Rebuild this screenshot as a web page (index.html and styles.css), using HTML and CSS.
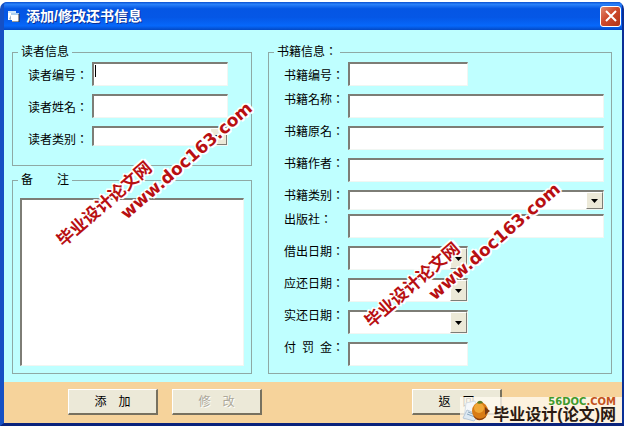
FILE: index.html
```html
<!DOCTYPE html>
<html lang="zh">
  <head>
    <meta charset="UTF-8" />
    <title>添加/修改还书信息</title>
    <link rel="stylesheet" href="styles.css">
  </head>
  <body>
    <div class="window">
      <header class="titlebar">
        <svg class="app-icon" width="12" height="12" viewBox="0 0 12 12">
          <path d="M0 1h8v2h3v9H4v-2H0z" fill="#fff" />
          <path d="M0 1h8v2H0z" fill="#cfe6fa" />
          <path d="M3 4h8" stroke="#5aa0e0" />
          <path d="M1 9l2-4v5z" fill="#9fb4c8" />
          <path d="M11 4v8H4" fill="none" stroke="#333" />
        </svg>
        <h1>添加/修改还书信息</h1>
        <button class="close" type="button" aria-label="关闭">
          <svg width="12" height="12" viewBox="0 0 12 12">
            <path d="M1 1l10 10M11 1L1 11" stroke="#fff" stroke-width="2" />
          </svg>
        </button>
      </header>

      <form>
        <main class="panels">
          <div class="column">
            <fieldset class="group reader">
              <legend>读者信息</legend>
              <div class="row middle">
                <label for="readerId">读者编号：</label>
                <input id="readerId" class="field current" type="text" />
              </div>
              <div class="row middle">
                <label for="readerName">读者姓名：</label>
                <input id="readerName" class="field" type="text" />
              </div>
              <div class="row middle tight">
                <label for="readerType">读者类别：</label>
                <span class="combo">
                  <select id="readerType" class="field"><option></option></select>
                  <span class="arrow"><svg width="7" height="4" viewBox="0 0 7 4"><path d="M0 0h7L3.500 4z" /></svg></span>
                </span>
              </div>
            </fieldset>
            <fieldset class="group notes">
              <legend><label for="remark">备　　注</label></legend>
              <textarea id="remark" class="field"></textarea>
            </fieldset>
          </div>

          <fieldset class="group book">
            <legend>书籍信息：</legend>
            <div class="row middle">
              <label for="bookId">书籍编号：</label>
              <input id="bookId" class="field short" type="text" />
            </div>
            <div class="row">
              <label for="bookName">书籍名称：</label>
              <input id="bookName" class="field" type="text" />
            </div>
            <div class="row">
              <label for="bookOriginal">书籍原名：</label>
              <input id="bookOriginal" class="field" type="text" />
            </div>
            <div class="row">
              <label for="bookAuthor">书籍作者：</label>
              <input id="bookAuthor" class="field" type="text" />
            </div>
            <div class="row tight">
              <label for="bookType">书籍类别：</label>
              <span class="combo">
                <select id="bookType" class="field"><option></option></select>
                <span class="arrow"><svg width="7" height="4" viewBox="0 0 7 4"><path d="M0 0h7L3.500 4z" /></svg></span>
              </span>
            </div>
            <div class="row">
              <label for="publisher">出版社：</label>
              <input id="publisher" class="field" type="text" />
            </div>
            <div class="row">
              <label for="lendDate">借出日期：</label>
              <span class="combo short">
                <select id="lendDate" class="field"><option></option></select>
                <span class="arrow"><svg width="7" height="4" viewBox="0 0 7 4"><path d="M0 0h7L3.500 4z" /></svg></span>
              </span>
            </div>
            <div class="row">
              <label for="dueDate">应还日期：</label>
              <span class="combo short">
                <select id="dueDate" class="field"><option></option></select>
                <span class="arrow"><svg width="7" height="4" viewBox="0 0 7 4"><path d="M0 0h7L3.500 4z" /></svg></span>
              </span>
            </div>
            <div class="row">
              <label for="returnDate">实还日期：</label>
              <span class="combo short">
                <select id="returnDate" class="field"><option></option></select>
                <span class="arrow"><svg width="7" height="4" viewBox="0 0 7 4"><path d="M0 0h7L3.500 4z" /></svg></span>
              </span>
            </div>
            <div class="row">
              <label for="fine">付&ensp;罚&ensp;金：</label>
              <input id="fine" class="field short" type="text" />
            </div>
          </fieldset>
        </main>

        <footer class="actions">
          <button class="btn" type="button">添　加</button>
          <button class="btn" type="button" disabled>修　改</button>
          <button class="btn back" type="button">返　回</button>
        </footer>
      </form>

      <div class="stamp stamp-left">
        <div class="stamp-name">毕业设计论文网</div>
        <div class="stamp-url">www.doc163.com</div>
      </div>
      <div class="stamp stamp-right">
        <div class="stamp-name">毕业设计论文网</div>
        <div class="stamp-url">www.doc163.com</div>
      </div>

      <div class="brand">
        <svg width="30" height="24" viewBox="0 0 30 24">
          <path d="M5 5l9-2 4 15-15 3z" fill="#f4f7fa" stroke="#d5dee6" />
          <path d="M2 20l4-8 12 5-5 6z" fill="#dde9f3" stroke="#b9c8d6" />
          <path d="M6 16l8 3M7 14l8 3" stroke="#8aa6bd" />
          <ellipse cx="19" cy="13" rx="8" ry="9" fill="#d87b16" />
          <ellipse cx="18" cy="10" rx="5" ry="5" fill="#f0a838" />
          <path d="M12 17c4 5 11 5 14-1-2 7-11 9-14 1z" fill="#8c3f0c" />
          <path d="M16 5c1-3 5-3 6 0-3 1-5 1-6 0z" fill="#5b7a25" />
          <path d="M24 9l5 4-5 4z" fill="#7b3a12" />
        </svg>
        <div class="brand-text">
          <div class="brand-url">56DOC<span>.COM</span></div>
          <div class="brand-name">毕业设计(论文)网</div>
        </div>
      </div>
    </div>
  </body>
</html>
```

FILE: styles.css
```css
:root {
  --cyan: #bfffff;
  --sand: #f6d39b;
  --face: #ece9d8;
  --shadow: #7d7d76;
  --red: #b80f12;
}

* {
  box-sizing: border-box;
}

body {
  margin: 0;
  padding: 2px 0;
  background: #fff;
  color: #000;
  font-family: "Liberation Sans", "Noto Sans CJK TC", sans-serif;
  font-feature-settings: "locl" 0;
  font-size: 12px;
  line-height: 12px;
}

.window {
  position: relative;
  border: solid #0a35a8;
  border-width: 0 2px 3px 4px;
  border-color: #0a35a8 #0a2f96 #0a237c #1650c4;
  border-radius: 7px 7px 0 0;
  background: #0a5cf0;
}

.titlebar {
  display: flex;
  align-items: center;
  gap: 6px;
  height: 28px;
  padding: 0 1px 0 4px;
  border-radius: 4px 4px 0 0;
  background: linear-gradient(#0a4fd0 0%, #2b82fa 8%, #0556e4 24%, #0557e6 55%, #0668fb 85%, #0349c4 100%);
}

h1 {
  flex: 1;
  margin: 0;
  color: #fff;
  font-size: 14px;
  line-height: 20px;
  text-shadow: 1px 1px 0 #0a2f96;
}

.close {
  display: flex;
  align-items: center;
  justify-content: center;
  width: 21px;
  height: 21px;
  padding: 0;
  border: 1px solid #fff;
  border-radius: 3px;
  background: linear-gradient(135deg, #e08a70, #cf4a2c 45%, #b03416);
}

.panels {
  display: grid;
  grid-template-columns: 240fr 344fr;
  gap: 16px;
  padding: 14px 10px 8px 8px;
  background: var(--cyan);
}

.column {
  display: flex;
  flex-direction: column;
  gap: 6px;
}

.group {
  min-width: 0;
  margin: 0;
  padding: 2px 7px 7px 15px;
  border: 1px solid #8fa9a5;
}

legend {
  margin-left: -10px;
  padding: 0 3px;
  line-height: 16px;
}

.reader {
  padding: 2px 23px 19px 15px;
}

.notes {
  flex: 1;
  display: flex;
  flex-direction: column;
  padding: 10px 7px 7px;
}

.notes legend {
  margin-left: -2px;
}

.notes textarea {
  flex: 1;
  resize: none;
}

.row {
  display: flex;
  height: 24px;
  margin-bottom: 8px;
}

.row:last-child {
  margin-bottom: 0;
}

.row label {
  flex: 0 0 64px;
}

.row.middle label {
  line-height: 28px;
}

.row.tight {
  height: 20px;
  margin-bottom: 4px;
}

.row.tight:last-child {
  margin-bottom: 0;
}

.field {
  flex: 1;
  min-width: 0;
  width: 100%;
  height: 100%;
  margin: 0;
  padding: 1px 2px;
  border: solid;
  border-width: 2px 1px 1px 2px;
  border-color: var(--shadow) #f1f6f2 #f1f6f2 var(--shadow);
  border-radius: 0;
  outline: none;
  background: #fff;
  font: inherit;
  appearance: none;
}

/* steady caret in the active field */
.current {
  background: linear-gradient(#000, #000) 1px 1px / 1px 12px no-repeat #fff;
  caret-color: transparent;
}

.combo {
  position: relative;
  flex: 1;
}

.short {
  flex: 0 0 120px;
}

.arrow {
  position: absolute;
  top: 2px;
  right: 1px;
  bottom: 1px;
  display: flex;
  align-items: center;
  justify-content: center;
  width: 17px;
  border: 1px solid;
  border-color: #fff var(--shadow) var(--shadow) #fff;
  background: var(--face);
  pointer-events: none;
}

.actions {
  display: flex;
  gap: 14px;
  padding: 7px 120px 8px 64px;
  background: var(--sand);
}

.btn {
  width: 90px;
  height: 26px;
  padding: 0;
  border: solid;
  border-width: 1px 2px 2px 1px;
  border-color: #fff #77715f #77715f #fff;
  background: var(--face);
  color: #000;
  font: inherit;
}

.btn:disabled {
  color: #aca899;
  text-shadow: 1px 1px 0 #fff;
}

.back {
  margin-left: auto;
}

/* diagonal site stamps lying over the form */
.stamp {
  position: absolute;
  width: 232px;
  color: var(--red);
  font-weight: bold;
  line-height: 20px;
  white-space: nowrap;
  text-shadow: 1px 0 #fff, -1px 0 #fff, 0 1px #fff, 0 -1px #fff, 1px 1px #fff, -1px -1px #fff, 2px 0 #fff, -2px 0 #fff, 0 2px #fff, 0 -2px #fff;
  transform: rotate(-41deg);
  pointer-events: none;
}

.stamp-left {
  left: 34px;
  top: 153px;
}

.stamp-right {
  left: 342px;
  top: 234px;
}

.stamp-name {
  font-size: 17px;
}

.stamp-url {
  padding-left: 66px;
  font-family: "DejaVu Sans", sans-serif;
  font-size: 17px;
}

.brand {
  position: absolute;
  right: 0;
  bottom: 0;
  display: flex;
  align-items: center;
  gap: 2px;
  padding: 0 6px 0 1px;
  background: rgba(255, 250, 240, 0.8);
}

.brand-text {
  color: #2b1a12;
  font-weight: bold;
}

.brand-url {
  color: #3f9a2c;
  font-family: "DejaVu Sans", sans-serif;
  font-size: 10px;
  line-height: 10px;
  text-align: right;
}

.brand-url span {
  color: #c4521c;
}

.brand-name {
  font-size: 16px;
  line-height: 16px;
}
```
